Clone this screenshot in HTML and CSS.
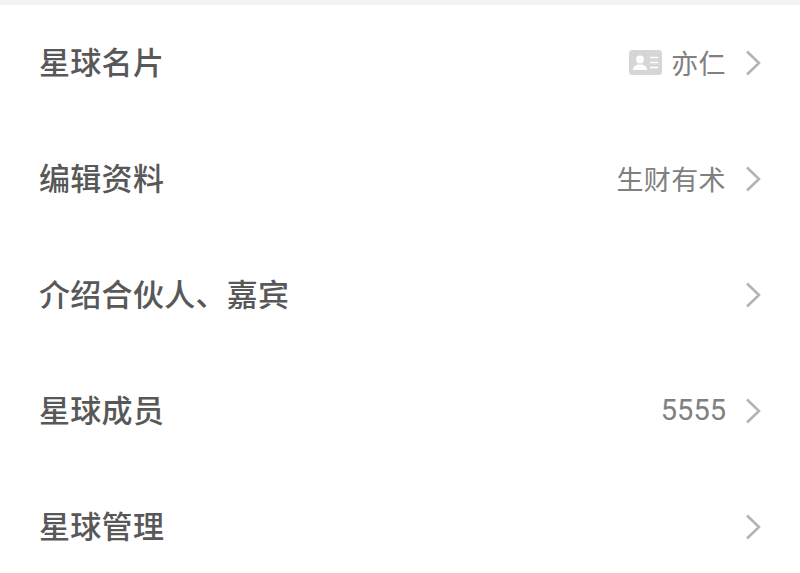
FILE: index.html
```html
<!DOCTYPE html>
<html lang="zh">

<head>
    <meta charset="UTF-8">
    <meta name="viewport" content="width=device-width, initial-scale=1.0">
    <title>星球设置</title>
    <link rel="stylesheet" href="styles.css">
</head>

<body>
    <div class="top-strip"></div>
    <ul class="menu">
        <li class="row">
            <span class="label">星球名片</span>
            <span class="value">
                <svg class="card-icon" viewBox="0 0 33 25">
                    <rect width="33" height="25" rx="3.5" fill="#d6d6d6" />
                    <circle cx="11" cy="9.5" r="4" fill="#fff" />
                    <path d="M4 20c0-4 3-5.500 7-5.500s7 1.500 7 5.500z" fill="#fff" />
                    <path d="M21 7.500h8M21 12.500h8M21 17.500h8" stroke="#fff" stroke-width="1.600" fill="none" />
                </svg>
                亦仁
            </span>
            <svg class="chevron" viewBox="0 0 16 26"><path d="M2 1.500 14 13 2 24.500" /></svg>
        </li>
        <li class="row">
            <span class="label">编辑资料</span>
            <span class="value">生财有术</span>
            <svg class="chevron" viewBox="0 0 16 26"><path d="M2 1.500 14 13 2 24.500" /></svg>
        </li>
        <li class="row">
            <span class="label">介绍合伙人、嘉宾</span>
            <svg class="chevron" viewBox="0 0 16 26"><path d="M2 1.500 14 13 2 24.500" /></svg>
        </li>
        <li class="row">
            <span class="label">星球成员</span>
            <span class="value number">5555</span>
            <svg class="chevron" viewBox="0 0 16 26"><path d="M2 1.500 14 13 2 24.500" /></svg>
        </li>
        <li class="row">
            <span class="label">星球管理</span>
            <svg class="chevron" viewBox="0 0 16 26"><path d="M2 1.500 14 13 2 24.500" /></svg>
        </li>
    </ul>
</body>

</html>
```

FILE: styles.css
```css
body {
    margin: 0;
    background-color: #fff;
    font-family: "Noto Sans CJK SC", "Liberation Sans", sans-serif;
    overflow: hidden;
}

.top-strip {
    height: 5px;
    background-color: #f4f4f4;
}

.menu {
    list-style: none;
    margin: 0;
    padding: 0;
}

.row {
    display: flex;
    align-items: center;
    height: 116px;
    padding: 0 39px 0 39px;
}

.label {
    flex: 1;
    padding-bottom: 6px;
    font-size: 31px;
    font-weight: 500;
    letter-spacing: 0.3px;
    color: #585858;
}

.value {
    display: flex;
    align-items: center;
    padding-bottom: 2px;
    font-size: 27px;
    letter-spacing: 0.4px;
    color: #808080;
    margin-right: 19px;
}

.number {
    font-family: "Roboto", sans-serif;
    font-size: 29px;
    letter-spacing: 0;
}

.card-icon {
    width: 33px;
    height: 25px;
    margin-right: 9px;
}

.chevron {
    width: 16px;
    height: 26px;
    fill: none;
    stroke: #b4b4b4;
    stroke-width: 2.6;
}
```
